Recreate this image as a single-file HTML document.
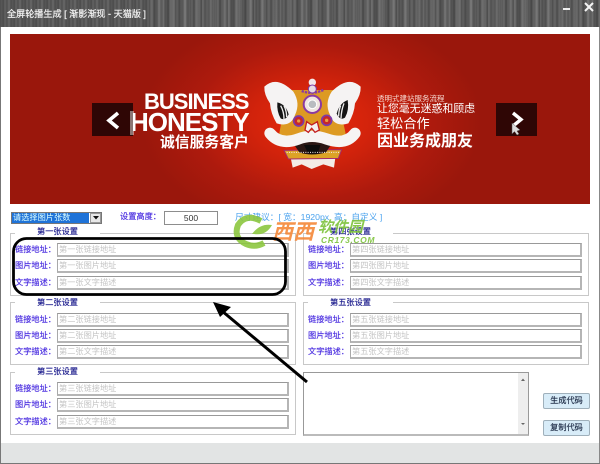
<!DOCTYPE html>
<html><head><meta charset="utf-8">
<style>
html,body{margin:0;padding:0;background:#fff}
#w{position:relative;width:600px;height:464px;overflow:hidden;background:#fff;font-family:"Liberation Sans","Noto Sans CJK SC",sans-serif;font-size:8.2px}
#w div,#w span,#w svg{position:absolute}
.t{white-space:nowrap;line-height:12px}
.g{border:1px solid #c8c8c8;width:284px;height:61px;box-sizing:content-box}
.lg{background:#fff;color:#1a1a8c;text-align:center;width:85px;height:12px;line-height:12px;font-size:8.2px;white-space:nowrap;-webkit-text-stroke:.15px #1a1a8c}
.l{color:#4a2ee0;white-space:nowrap;line-height:12px;font-size:8.2px;-webkit-text-stroke:.15px #4a2ee0}
.i{background:#fff;border:1px solid #a9a9a9;border-top-color:#999;border-bottom:2px solid #b5b5b5;border-right:2px solid #b5b5b5;box-sizing:border-box;width:232px;height:14px;color:#c4c4c4;font-size:8.2px;line-height:12px;padding-left:1px;white-space:nowrap}
.b{background:#d8ecf8;border:1px solid #9fb0bb;border-radius:2px;box-sizing:border-box;width:47px;height:16px;text-align:center;color:#1c2a44;font-size:8.2px;line-height:14px;-webkit-text-stroke:.15px #1c2a44}
</style></head><body>
<div id="w">
<div style="left:0;top:0;width:600px;height:27px;background:repeating-linear-gradient(90deg,#4c4c4c 0,#5a5a5a 2px,#484848 3px,#626262 5px,#505050 7px,#5c5c5c 8px,#6a6a6a 9px,#4e4e4e 11px)"></div>
<div style="left:150px;top:0;width:450px;height:27px;background:repeating-linear-gradient(90deg,rgba(255,255,255,.08) 0,rgba(255,255,255,0) 3px,rgba(0,0,0,.1) 5px,rgba(255,255,255,.14) 9px,rgba(0,0,0,.05) 13px)"></div>
<div class="t" style="left:7px;top:8px;color:#f2f2f2;font-size:9.1px;-webkit-text-stroke:.2px #f2f2f2">全屏轮播生成 [ 渐影渐现 - 天猫版 ]</div>
<div style="left:563px;top:8px;width:7px;height:2px;background:#eee"></div>
<svg style="left:584px;top:2px" width="11" height="11" viewBox="0 0 11 11"><path d="M1 1L9 9M9 1L1 9" stroke="#f4f4f4" stroke-width="2"/></svg>
<div style="left:0;top:27px;width:1px;height:437px;background:#777"></div>
<div style="left:599px;top:27px;width:1px;height:437px;background:#888"></div>
<div style="left:1px;top:443px;width:598px;height:20px;background:#e2e4e4"></div>
<div style="left:0;top:463px;width:600px;height:1px;background:#777"></div>

<!-- banner -->
<div style="left:10px;top:34px;width:580px;height:170px;background:radial-gradient(ellipse 170px 110px at 302px 88px,#e8290c 0,#d2230c 35%,#ad1a0d 70%,#9a170c 100%),#9a170c;overflow:hidden">
<span class="t" style="left:134px;top:55px;color:#fff;font:bold 22px/26px 'Liberation Sans',sans-serif;letter-spacing:-1px">BUSINESS</span>
<span class="t" style="left:120px;top:70px;color:#fff;font:bold 26px/36px 'Liberation Sans',sans-serif;letter-spacing:-1px">HONESTY</span>
<span class="t" style="left:150px;top:99px;color:#fff;font-size:14.8px;line-height:20px;font-weight:700">诚信服务客户</span>
<span class="t" style="left:367px;top:59px;color:#f6d8d0;font-size:7.5px;line-height:12px">透明式建站服务流程</span>
<span class="t" style="left:367px;top:68px;color:#fff;font-size:10.9px;line-height:14px">让您毫无迷惑和顾虑</span>
<span class="t" style="left:367px;top:81px;color:#fff;font-size:13.2px;line-height:18px">轻松合作</span>
<span class="t" style="left:367px;top:98px;color:#fff;font-size:16px;line-height:20px;font-weight:700">因业务成朋友</span>
</div>
<!-- lion -->
<svg style="left:260px;top:75px" width="105" height="100" viewBox="0 0 315 300">
<path d="M95 45L220 45L245 120L260 190L55 190L70 110Z" fill="#dd9a22"/>
<path d="M92 248L98 278L125 268L155 282L190 268L222 278L226 248Z" fill="#f3ece6"/>
<path d="M72 226L245 224L235 250L85 252Z" fill="#dca326" stroke="#a52a6a" stroke-width="3"/>
<path d="M95 198L220 198L198 232Q155 245 118 232Z" fill="#2a1714"/>
<path d="M132 210L182 210L172 236L145 236Z" fill="#0c0c0c"/>
<path d="M30 175Q60 212 115 192Q155 176 200 192Q258 212 285 175" fill="none" stroke="#f6f4f3" stroke-width="34" stroke-linecap="round"/>
<path d="M13 35Q50 0 100 50Q122 85 105 120Q92 158 50 145Q32 115 30 85Q12 60 13 35Z" fill="#f5f3f3"/>
<path d="M302 35Q265 0 215 50Q193 85 210 120Q223 158 265 145Q283 115 285 85Q303 60 302 35Z" fill="#f5f3f3"/>
<path d="M52 82Q78 88 86 118Q76 138 62 130Q50 110 52 82Z" fill="#151515"/>
<path d="M263 75Q238 85 230 116Q240 138 255 128Q268 105 263 75Z" fill="#151515"/>
<path d="M62 92Q72 110 72 132M72 92Q80 108 80 126" stroke="#eee" stroke-width="4" fill="none"/>
<path d="M252 85Q244 105 243 130M242 92Q236 106 236 124" stroke="#eee" stroke-width="4" fill="none"/>
<circle cx="157" cy="88" r="26" fill="#f0e6e0" stroke="#8b3aa0" stroke-width="6"/>
<circle cx="157" cy="88" r="13" fill="#b9bcc0" stroke="#fff" stroke-width="3"/>
<circle cx="116" cy="138" r="15" fill="#c7262a" stroke="#7b3aa8" stroke-width="5"/>
<circle cx="200" cy="136" r="15" fill="#c7262a" stroke="#7b3aa8" stroke-width="5"/>
<circle cx="116" cy="138" r="5" fill="#e8a040"/><circle cx="200" cy="136" r="5" fill="#e8a040"/>
<path d="M135 165L140 140L155 150L172 140L178 165L165 172L155 160L145 172Z" fill="#f4f0f0" stroke="#c41f20" stroke-width="4"/>
<path d="M125 48Q155 60 190 45" stroke="#8b3aa0" stroke-width="7" fill="none" stroke-dasharray="7 3"/>
<circle cx="157" cy="22" r="11" fill="#f2e8ea"/><circle cx="157" cy="42" r="12" fill="#e8dce4" stroke="#7b3aa8" stroke-width="3"/>
<path d="M80 232L240 232" stroke="#f5ecec" stroke-width="3" stroke-dasharray="3 4"/>
</svg>
<!-- arrows -->
<div style="left:92px;top:103px;width:41px;height:33px;background:#2f0605"></div>
<div style="left:130px;top:111px;width:4px;height:24px;background:rgba(255,255,255,.45)"></div>
<svg style="left:92px;top:103px" width="41" height="33"><path d="M26 10L17 17.5L26 25" fill="none" stroke="#fff" stroke-width="3.6"/></svg>
<div style="left:496px;top:103px;width:41px;height:33px;background:#2f0605"></div>
<svg style="left:496px;top:103px" width="41" height="33"><path d="M17 10L25 16.5L17 23" fill="none" stroke="#fff" stroke-width="3.4"/><path d="M16 20L16 31L18.500 28.500L21 32L23 31L21 28L24 27Z" fill="#ddd" stroke="#555" stroke-width=".5"/></svg>

<!-- controls -->
<div style="left:11px;top:212px;width:91px;height:12px;border:1px solid #777;box-sizing:border-box;background:#fff"></div>
<div class="t" style="left:12px;top:213px;width:77px;height:10px;background:#1f73d8;color:#dff;font-size:8.2px;line-height:10px;text-indent:1px">请选择图片张数</div>
<div style="left:90px;top:213px;width:11px;height:10px;background:#e8e8e8;border:1px solid #999;box-sizing:border-box"></div>
<svg style="left:93px;top:216px" width="6" height="4"><path d="M0 0H6L3 3.5Z" fill="#111"/></svg>
<div class="t" style="left:120px;top:211px;color:#4a2ee0;-webkit-text-stroke:.15px #4a2ee0">设置高度：</div>
<div style="left:164px;top:211px;width:54px;height:14px;border:1px solid #8d8d8d;box-sizing:border-box;background:#fff;text-align:center;font-size:8.5px;line-height:12px;color:#333">500</div>
<div class="t" style="left:235px;top:211px;color:#4aa2ee;font-size:8.7px">尺寸建议：[ 宽：1920px&nbsp;&nbsp;高：自定义 ]</div>

<!-- groups -->
<div class="g" style="left:10px;top:233px"></div><div class="lg" style="left:15px;top:226px">第一张设置</div>
<div class="g" style="left:303px;top:233px"></div><div class="lg" style="left:308px;top:226px">第四张设置</div>
<div class="g" style="left:10px;top:302px"></div><div class="lg" style="left:15px;top:297px">第二张设置</div>
<div class="g" style="left:303px;top:302px"></div><div class="lg" style="left:308px;top:297px">第五张设置</div>
<div class="g" style="left:10px;top:372px"></div><div class="lg" style="left:15px;top:366px">第三张设置</div>

<div class="l" style="left:15px;top:244px">链接地址：</div><div class="i" style="left:57px;top:243px">第一张链接地址</div>
<div class="l" style="left:15px;top:260px">图片地址：</div><div class="i" style="left:57px;top:259px">第一张图片地址</div>
<div class="l" style="left:15px;top:277px">文字描述：</div><div class="i" style="left:57px;top:276px">第一张文字描述</div>
<div class="l" style="left:15px;top:314px">链接地址：</div><div class="i" style="left:57px;top:313px">第二张链接地址</div>
<div class="l" style="left:15px;top:330px">图片地址：</div><div class="i" style="left:57px;top:329px">第二张图片地址</div>
<div class="l" style="left:15px;top:346px">文字描述：</div><div class="i" style="left:57px;top:345px">第二张文字描述</div>
<div class="l" style="left:15px;top:383px">链接地址：</div><div class="i" style="left:57px;top:382px">第三张链接地址</div>
<div class="l" style="left:15px;top:399px">图片地址：</div><div class="i" style="left:57px;top:398px">第三张图片地址</div>
<div class="l" style="left:15px;top:416px">文字描述：</div><div class="i" style="left:57px;top:415px">第三张文字描述</div>

<div class="l" style="left:308px;top:244px">链接地址：</div><div class="i" style="left:350px;top:243px">第四张链接地址</div>
<div class="l" style="left:308px;top:260px">图片地址：</div><div class="i" style="left:350px;top:259px">第四张图片地址</div>
<div class="l" style="left:308px;top:277px">文字描述：</div><div class="i" style="left:350px;top:276px">第四张文字描述</div>
<div class="l" style="left:308px;top:314px">链接地址：</div><div class="i" style="left:350px;top:313px">第五张链接地址</div>
<div class="l" style="left:308px;top:330px">图片地址：</div><div class="i" style="left:350px;top:329px">第五张图片地址</div>
<div class="l" style="left:308px;top:346px">文字描述：</div><div class="i" style="left:350px;top:345px">第五张文字描述</div>

<!-- textarea -->
<div style="left:303px;top:372px;width:226px;height:64px;border:1px solid #999;border-bottom:2px solid #bbb;box-sizing:border-box;background:#fff"></div>
<div style="left:518px;top:373px;width:10px;height:61px;background:#eee"></div>
<svg style="left:518px;top:376px" width="10" height="54"><path d="M3 5L5 2.500L7 5Z" fill="#666"/><path d="M3 47L7 47L5 49Z" fill="#666"/></svg>
<div class="b" style="left:543px;top:393px">生成代码</div>
<div class="b" style="left:543px;top:420px">复制代码</div>

<!-- watermark -->
<svg style="left:228px;top:208px" width="50" height="42" viewBox="0 0 50 42"><path d="M33 13Q18 5 10 17Q5 30 18 36Q27 40 36 35" fill="none" stroke="#8cc63f" stroke-width="6" opacity=".9"/><path d="M24 26Q32 15 44 17Q38 28 26 26Z" fill="#8cc63f" opacity=".9"/></svg>
<div class="t" style="left:272px;top:221px;color:#f58a3c;font-size:21px;line-height:24px;font-weight:700;font-style:italic;opacity:.92">西西</div>
<div class="t" style="left:318px;top:220px;color:#7cc23a;font-size:15px;line-height:16px;font-weight:700;font-style:italic;opacity:.9">软件园</div>
<div class="t" style="left:321px;top:236px;color:#7cc23a;font-size:8.500px;line-height:9px;font-weight:700;font-style:italic;letter-spacing:.6px;opacity:.9">CR173.COM</div>

<!-- annotations -->
<svg style="left:0;top:0" width="600" height="464">
<rect x="13.500" y="238.500" width="272" height="56" rx="13" fill="none" stroke="#000" stroke-width="2.800"/>
<path d="M222 311L307 382" stroke="#000" stroke-width="3"/>
<path d="M213 302L231 307L220 317Z" fill="#000"/>
</svg>
</div>
</body></html>
